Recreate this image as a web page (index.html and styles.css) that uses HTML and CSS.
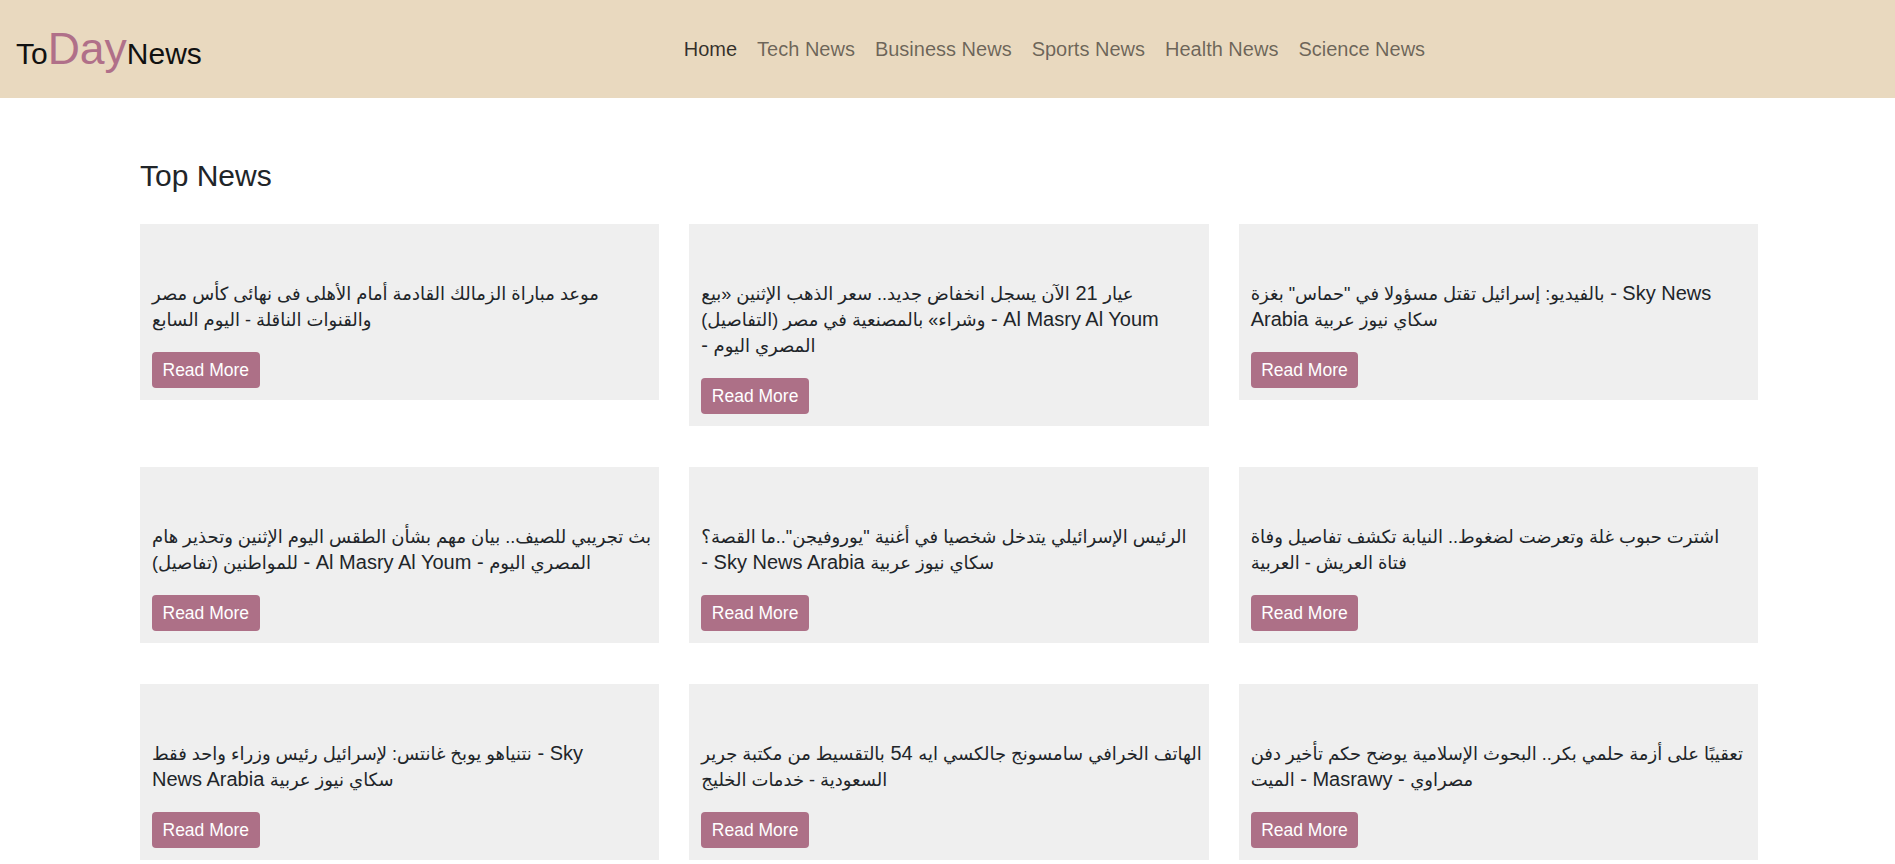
FILE: index.html
```html
<!DOCTYPE html>
<html lang="en">
<head>
<meta charset="utf-8">
<title>ToDayNews</title>
<link rel="stylesheet" href="styles.css">
</head>
<body>
<header class="topbar">
  <a class="logo" href="#">To<span class="logo-day">Day</span>News</a>
  <nav class="nav">
    <a class="nav-link active" href="#">Home</a>
    <a class="nav-link" href="#">Tech News</a>
    <a class="nav-link" href="#">Business News</a>
    <a class="nav-link" href="#">Sports News</a>
    <a class="nav-link" href="#">Health News</a>
    <a class="nav-link" href="#">Science News</a>
  </nav>
</header>
<main class="main">
  <h2 class="section-title">Top News</h2>
  <div class="grid">
    <div class="card">
      <p class="card-text"><span class="ar">موعد مباراة الزمالك القادمة أمام الأهلى فى نهائى كأس مصر</span><br><span class="ar">والقنوات الناقلة - اليوم السابع</span></p>
      <a class="btn" href="#">Read More</a>
    </div>
    <div class="card">
      <p class="card-text"><span class="ar">عيار</span> 21 <span class="ar">الآن يسجل انخفاض جديد.. سعر الذهب الإثنين «بيع</span><br><span class="ar">وشراء» بالمصنعية في مصر (التفاصيل)</span> - Al Masry Al Youm<br>- <span class="ar">المصري اليوم</span></p>
      <a class="btn" href="#">Read More</a>
    </div>
    <div class="card">
      <p class="card-text"><span class="ar">بالفيديو: إسرائيل تقتل مسؤولا في "حماس" بغزة</span> - Sky News<br>Arabia <span class="ar">سكاي نيوز عربية</span></p>
      <a class="btn" href="#">Read More</a>
    </div>
    <div class="card">
      <p class="card-text"><span class="ar">بث تجريبي للصيف.. بيان مهم بشأن الطقس اليوم الإثنين وتحذير هام</span><br><span class="ar">للمواطنين (تفاصيل)</span> - Al Masry Al Youm - <span class="ar">المصري اليوم</span></p>
      <a class="btn" href="#">Read More</a>
    </div>
    <div class="card">
      <p class="card-text"><span class="ar">الرئيس الإسرائيلي يتدخل شخصيا في أغنية "يوروفيجن"..ما القصة؟</span><br>- Sky News Arabia <span class="ar">سكاي نيوز عربية</span></p>
      <a class="btn" href="#">Read More</a>
    </div>
    <div class="card">
      <p class="card-text"><span class="ar">اشترت حبوب غلة وتعرضت لضغوط.. النيابة تكشف تفاصيل وفاة</span><br><span class="ar">فتاة العريش - العربية</span></p>
      <a class="btn" href="#">Read More</a>
    </div>
    <div class="card">
      <p class="card-text"><span class="ar">نتنياهو يوبخ غانتس: لإسرائيل رئيس وزراء واحد فقط</span> - Sky<br>News Arabia <span class="ar">سكاي نيوز عربية</span></p>
      <a class="btn" href="#">Read More</a>
    </div>
    <div class="card">
      <p class="card-text"><span class="ar">الهاتف الخرافي سامسونج جالكسي ايه</span> 54 <span class="ar">بالتقسيط من مكتبة جرير</span><br><span class="ar">السعودية - خدمات الخليج</span></p>
      <a class="btn" href="#">Read More</a>
    </div>
    <div class="card">
      <p class="card-text"><span class="ar">تعقيبًا على أزمة حلمي بكر.. البحوث الإسلامية يوضح حكم تأخير دفن</span><br><span class="ar">الميت</span> - Masrawy - <span class="ar">مصراوي</span></p>
      <a class="btn" href="#">Read More</a>
    </div>
  </div>
</main>
</body>
</html>
```
FILE: styles.css
```css
* { box-sizing: border-box; }

body {
  margin: 0;
  font-family: "Liberation Sans", Arial, "DejaVu Sans", sans-serif;
  color: #212529;
  background: #fff;
}

.topbar {
  height: 98px;
  background: #e9d9bf;
  display: flex;
  align-items: center;
  padding: 0 16px;
}

.logo {
  font-size: 30px;
  color: #111;
  text-decoration: none;
  margin-right: 28px;
  line-height: 1;
}

.logo-day {
  font-size: 44.5px;
  color: #b07089;
}

.nav {
  flex: 1;
  display: flex;
  justify-content: center;
}

.nav-link {
  font-size: 20px;
  padding: 0 10px;
  color: rgba(0, 0, 0, 0.55);
  text-decoration: none;
}

.nav-link.active {
  color: rgba(0, 0, 0, 0.78);
}

.main {
  padding: 0 137px 0 140px;
}

.section-title {
  font-size: 30px;
  font-weight: normal;
  line-height: 34px;
  margin: 61px 0 31px;
  color: #212529;
}

.grid {
  display: grid;
  grid-template-columns: repeat(3, minmax(0, 1fr));
  column-gap: 30px;
  row-gap: 41px;
  align-items: start;
}

.card {
  min-width: 0;
  background: #efefef;
  padding: 56px 12px 12px;
}

.card-text {
  margin: 0 0 20px;
  font-size: 20px;
  line-height: 26px;
  white-space: nowrap;
}

.ar {
  font-size: 18px;
  line-height: 18px;
}

.btn {
  display: inline-block;
  height: 36px;
  line-height: 36px;
  padding: 0 10.5px;
  background: #ad7087;
  color: #fff;
  font-size: 17.5px;
  border-radius: 4px;
  text-decoration: none;
}
```
